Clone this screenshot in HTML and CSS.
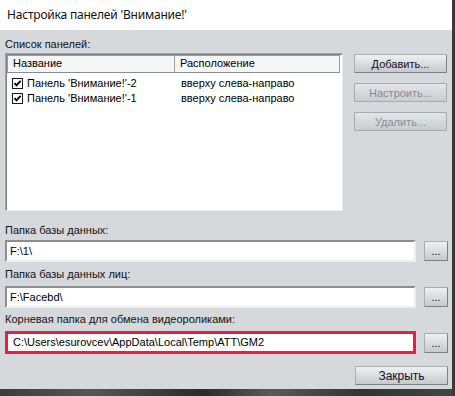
FILE: index.html
```html
<!DOCTYPE html>
<html lang="ru">
<head>
<meta charset="utf-8">
<link rel="stylesheet" href="styles.css">
</head>
<body>
<div class="window">
  <div class="titlebar">Настройка панелей 'Внимание!'</div>
  <div class="content">
    <div class="label first">Список панелей:</div>
    <div class="list-row">
      <div class="listbox">
        <div class="lv-header">
          <div class="col1">Название</div>
          <div class="col2">Расположение</div>
        </div>
        <div class="lv-row">
          <div class="col1"><svg class="chk" width="11" height="11" viewBox="0 0 11 11"><rect x="0.5" y="0.5" width="10" height="10" fill="#fff" stroke="#1a1a1a"/><path d="M2.5 5.2 L4.5 7.4 L8.6 2.8" fill="none" stroke="#000" stroke-width="1.8"/></svg>Панель 'Внимание!'-2</div>
          <div class="col2">вверху слева-направо</div>
        </div>
        <div class="lv-row">
          <div class="col1"><svg class="chk" width="11" height="11" viewBox="0 0 11 11"><rect x="0.5" y="0.5" width="10" height="10" fill="#fff" stroke="#1a1a1a"/><path d="M2.5 5.2 L4.5 7.4 L8.6 2.8" fill="none" stroke="#000" stroke-width="1.8"/></svg>Панель 'Внимание!'-1</div>
          <div class="col2">вверху слева-направо</div>
        </div>
      </div>
      <div class="btn-col">
        <button class="btn wide">Добавить...</button>
        <button class="btn wide disabled">Настроить...</button>
        <button class="btn wide disabled">Удалить...</button>
      </div>
    </div>

    <div class="label l2">Папка базы данных:</div>
    <div class="field-row f1">
      <div class="input">F:\1\</div>
      <button class="btn dots">...</button>
    </div>

    <div class="label l3">Папка базы данных лиц:</div>
    <div class="field-row">
      <div class="input">F:\Facebd\</div>
      <button class="btn dots">...</button>
    </div>

    <div class="label l4">Корневая папка для обмена видеороликами:</div>
    <div class="field-row">
      <div class="input red">C:\Users\esurovcev\AppData\Local\Temp\ATT\GM2</div>
      <button class="btn dots">...</button>
    </div>

    <div class="footer">
      <button class="btn wide close">Закрыть</button>
    </div>
  </div>
  <div class="bottom-strip"></div>
</div>
</body>
</html>
```
FILE: styles.css
```css
html, body {
  margin: 0;
  padding: 0;
  width: 455px;
  height: 396px;
  overflow: hidden;
  background: #2e2e2e;
}
.window {
  width: 452px;
  height: 396px;
  border-right: 3px solid #3a3a3a;
  display: flex;
  flex-direction: column;
  font-family: "Liberation Sans", Arial, sans-serif;
  font-size: 11px;
  color: #000;
}
.titlebar {
  height: 30px;
  background: #fff;
  box-sizing: border-box;
  padding-left: 7px;
  line-height: 30px;
  font-family: "Noto Sans", "Liberation Sans", sans-serif;
  font-size: 12px;
  letter-spacing: -0.2px;
  color: #111;
}
.content {
  height: 359px;
  background: #d5d9dc;
  box-sizing: border-box;
  padding-left: 5px;
  display: flex;
  flex-direction: column;
}
.label {
  height: 13px;
  line-height: 13px;
  color: #111;
}
.label.first { margin-top: 8px; }
.list-row {
  display: flex;
  margin-top: 2px;
  gap: 11px;
}
.listbox {
  width: 338px;
  height: 158px;
  box-sizing: border-box;
  background: #fff;
  border: 1px solid #a5a8ab;
  border-right-color: #e9ebec;
  border-bottom-color: #e9ebec;
  box-shadow: inset 1px 1px 0 #7c7f82;
}
.lv-header {
  display: flex;
  height: 18px;
  margin: 1px 2px 0 1px;
  box-sizing: border-box;
  border: 1px solid #9a9da0;
  border-bottom-color: #8a8d90;
  background: #f5f6f7;
  line-height: 15px;
}
.lv-header .col1 {
  width: 167px;
  border-right: 1px solid #a0a3a6;
  padding-left: 5px;
  box-sizing: border-box;
}
.lv-header .col2 {
  padding-left: 5px;
}
.lv-row {
  display: flex;
  height: 15px;
  line-height: 15px;
}
.lv-header + .lv-row { margin-top: 3px; }
.lv-row .col1 {
  width: 175px;
  padding-left: 6px;
  box-sizing: border-box;
  display: flex;
  align-items: center;
  gap: 4px;
}
.chk { flex: none; }
.btn-col {
  display: flex;
  flex-direction: column;
  gap: 10px;
  padding-top: 1px;
}
.btn {
  font-family: "Liberation Sans", Arial, sans-serif;
  font-size: 11px;
  color: #111;
  padding: 0;
  margin: 0;
  box-sizing: border-box;
  border: 1px solid #7d8184;
  border-top-color: #a9adb0;
  border-left-color: #a9adb0;
  border-radius: 1px;
  background: linear-gradient(#eef0f1, #c6cacd);
}
.btn.wide {
  width: 93px;
  height: 19px;
}
.btn.disabled {
  color: #888b8e;
  border-color: #a6aaad;
  background: linear-gradient(#e3e6e8, #c9cdd0);
}
.field-row {
  display: flex;
  align-items: center;
  margin-top: 5px;
  gap: 8px;
}
.field-row.f1 { margin-top: 3px; }
.l2 { margin-top: 13px; }
.l3 { margin-top: 6px; }
.l4 { margin-top: 5px; }
.input {
  width: 411px;
  height: 22px;
  box-sizing: border-box;
  background: #fff;
  border: 2px solid #8b8e91;
  border-right-color: #eceeef;
  border-bottom-color: #eceeef;
  padding-left: 3px;
  line-height: 18px;
}
.input.red {
  height: 23px;
  border: 3px solid #ee1c3e;
  padding-left: 5px;
  line-height: 17px;
}
.btn.dots {
  width: 24px;
  height: 20px;
  line-height: 14px;
  font-size: 11px;
}
.footer {
  display: flex;
  justify-content: flex-end;
  padding-right: 4px;
  margin-top: 12px;
}
.btn.close {
  height: 19px;
  font-size: 12px;
}
.bottom-strip {
  flex: 1;
  background: linear-gradient(90deg, #3c3c3c, #555 20%, #2a2a2a 45%, #5a5a5a 60%, #333 80%, #444);
}
```
